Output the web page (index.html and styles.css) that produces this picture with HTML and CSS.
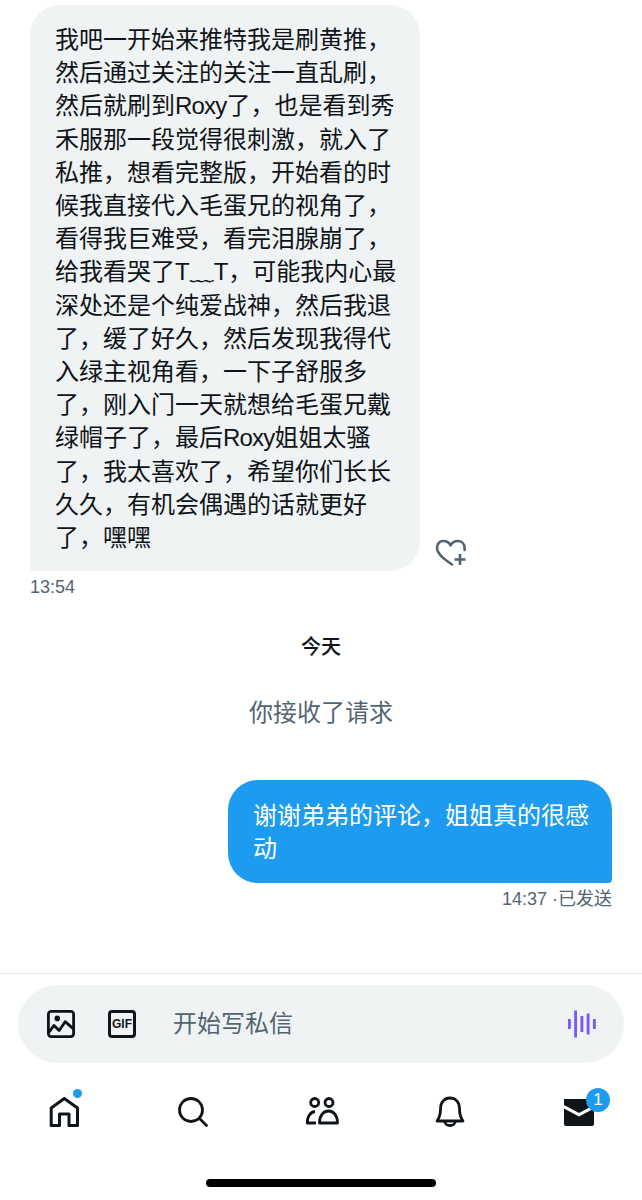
FILE: index.html
```html
<!DOCTYPE html>
<html lang="zh-CN">
<head>
<meta charset="utf-8">
<title>私信</title>
<link rel="stylesheet" href="styles.css">
</head>
<body>
<div class="page">
  <main class="thread">
    <div class="in-row">
      <div class="bubble bubble-in">我吧一开始来推特我是刷黄推，<br>然后通过关注的关注一直乱刷，<br>然后就刷到<span class="latin">Roxy</span>了，也是看到秀<br>禾服那一段觉得很刺激，就入了<br>私推，想看完整版，开始看的时<br>候我直接代入毛蛋兄的视角了，<br>看得我巨难受，看完泪腺崩了，<br>给我看哭了T﹏T，可能我内心最<br>深处还是个纯爱战神，然后我退<br>了，缓了好久，然后发现我得代<br>入绿主视角看，一下子舒服多<br>了，刚入门一天就想给毛蛋兄戴<br>绿帽子了，最后<span class="latin">Roxy</span>姐姐太骚<br>了，我太喜欢了，希望你们长长<br>久久，有机会偶遇的话就更好<br>了，嘿嘿</div>
      <svg class="like" viewBox="0 0 32 28" fill="none" stroke="#536471" stroke-width="2.6" stroke-linecap="round" stroke-linejoin="round"><path d="M17 25.5 C9 20 2 15 2 8.6 C2 4.6 5 2 8.4 2 C11.6 2 14.2 3.7 15.6 6.4 C17 3.7 19.6 2 22.8 2 C26.6 2 29.6 4.8 29.6 9 L29.6 11"/><path d="M25 15 V26 M19.5 20.5 H30.5" stroke-linecap="butt"/></svg>
    </div>
    <div class="time time-in">13:54</div>
    <div class="day">今天</div>
    <div class="notice">你接收了请求</div>
    <div class="bubble bubble-out">谢谢弟弟的评论，姐姐真的很感<br>动</div>
    <div class="time time-out">14:37 ·已发送</div>
  </main>
  <section class="composer">
    <div class="input">
      <svg class="tool" viewBox="0 0 30 30" fill="none" stroke="#0f1419" stroke-width="3" stroke-linejoin="round"><rect x="1.500" y="1.500" width="27" height="27" rx="3"/><circle cx="11" cy="9" r="3" fill="#0f1419" stroke="none"/><path d="M2 24 L7.500 16.500 L13 22 L19.500 12.500 L28 20"/></svg>
      <div class="tool gif"><span>GIF</span></div>
      <span class="placeholder">开始写私信</span>
      <svg class="voice" viewBox="0 0 28 28" fill="#7856ff"><rect x="0" y="9" width="2.800" height="10"/><rect x="6.200" y="0.500" width="2.800" height="27"/><rect x="12.500" y="6" width="2.800" height="16"/><rect x="18.700" y="3.500" width="2.800" height="21"/><rect x="25" y="9" width="2.800" height="10"/></svg>
    </div>
  </section>
  <nav class="tabs">
    <div class="tab">
      <svg class="tab-icon" viewBox="0 0 32 32" fill="none" stroke="#0f1419" stroke-width="3" stroke-linejoin="round"><path d="M3.200 12 L16.300 2.500 L29.500 12 V29.500 H21 V18 H11.500 V29.500 H3.200 Z"/></svg>
      <span class="dot"></span>
    </div>
    <div class="tab">
      <svg class="tab-icon" viewBox="0 0 32 32" fill="none" stroke="#0f1419" stroke-width="2.800" stroke-linecap="round"><circle cx="14" cy="14" r="11.500"/><path d="M23 23 L29.500 29.500"/></svg>
    </div>
    <div class="tab">
      <svg class="tab-icon people" viewBox="0 0 36 32" fill="none" stroke="#0f1419" stroke-width="2.800" stroke-linejoin="round"><circle cx="8.700" cy="6.500" r="4"/><circle cx="23" cy="6.500" r="4"/><path d="M10 27 H1.200 C1.200 21 4 16 9 15.500"/><path d="M13.500 27 H31.500 C31.500 20 28 15 22.500 15 C17 15 13.500 20 13.500 27 Z"/></svg>
    </div>
    <div class="tab">
      <svg class="tab-icon" viewBox="0 0 32 32" fill="none" stroke="#0f1419" stroke-width="2.800" stroke-linejoin="round"><path d="M3 25 C6 21 6.500 17 6.500 13 C6.500 6 10.500 2 16 2 C21.500 2 25.500 6 25.500 13 C25.500 17 26 21 29 25 Z"/><path d="M10.500 25 C11 31 21 31 21.500 25"/></svg>
    </div>
    <div class="tab">
      <svg class="tab-icon" viewBox="0 0 32 32"><path fill="#0f1419" d="M1 3 H29 Q31 3 31 5 V9 L16 17 L1 9 Z M1 12.500 L16 20.500 L31 12.500 V28 Q31 30 29 30 H3 Q1 30 1 28 Z"/></svg>
      <span class="badge">1</span>
    </div>
  </nav>
  <div class="home-bar"></div>
</div>
</body>
</html>
```

FILE: styles.css
```css
* { box-sizing: border-box; }
html, body { margin: 0; padding: 0; background: #fff; }
.page {
  width: 642px;
  height: 1200px;
  overflow: hidden;
  display: flex;
  flex-direction: column;
  font-family: "Liberation Sans", "Noto Sans CJK SC", sans-serif;
  color: #0f1419;
}
.thread {
  height: 974px;
  padding-top: 5px;
  display: flex;
  flex-direction: column;
  border-bottom: 1px solid #e4e7e9;
}
.in-row { display: flex; align-items: flex-end; }
.bubble { font-size: 24px; line-height: 33.200px; white-space: nowrap; }
.latin { letter-spacing: -0.800px; }
.bubble-in {
  width: 390px;
  height: 566px;
  margin-left: 30px;
  padding: 18px 0 0 25px;
  background: #eff3f4;
  border-radius: 30px 30px 30px 4px;
}
.like { width: 32px; height: 28px; margin: 0 0 4px 15px; }
.time { font-size: 18px; line-height: 20px; color: #536471; }
.time-in { margin: 6px 0 0 30px; }
.day { margin-top: 38px; text-align: center; font-size: 20px; line-height: 24px; font-weight: 500; }
.notice { margin-top: 38px; text-align: center; font-size: 24px; line-height: 32px; color: #536471; }
.bubble-out {
  align-self: flex-end;
  width: 384px;
  height: 103px;
  margin: 51px 30px 0 0;
  padding: 19px 0 0 25px;
  background: #1d9bf0;
  color: #fff;
  border-radius: 30px 30px 4px 30px;
}
.time-out { align-self: flex-end; margin: 6px 30px 0 0; }
.composer { padding: 11px 18px 0; }
.input {
  height: 78px;
  border-radius: 39px;
  background: #eff3f4;
  display: flex;
  align-items: center;
  padding: 0 28px 0 29px;
}
.tool { width: 28px; height: 28px; flex: none; }
.gif {
  margin-left: 33px;
  border: 3px solid #0f1419;
  border-radius: 4px;
  display: flex;
  align-items: center;
  justify-content: center;
  font-size: 12px;
  font-weight: 700;
}
.placeholder { margin-left: 37px; padding-bottom: 5px; font-size: 24px; color: #536471; flex: 1; }
.voice { width: 28px; height: 28px; flex: none; }
.tabs {
  display: flex;
  justify-content: space-between;
  padding: 33px 47px 0 48px;
}
.tab { position: relative; width: 32px; height: 32px; }
.tab-icon { width: 32px; height: 32px; display: block; }
.people { width: 36px; }
.dot {
  position: absolute;
  top: -7px;
  right: -2px;
  width: 9px;
  height: 9px;
  border-radius: 50%;
  background: #1d9bf0;
}
.badge {
  position: absolute;
  top: -8px;
  right: -15px;
  width: 24px;
  height: 24px;
  border-radius: 50%;
  background: #1d9bf0;
  color: #fff;
  font-size: 17px;
  line-height: 24px;
  text-align: center;
}
.home-bar {
  width: 230px;
  height: 8px;
  margin: 51px auto 0;
  border-radius: 4px;
  background: #000;
}
```
